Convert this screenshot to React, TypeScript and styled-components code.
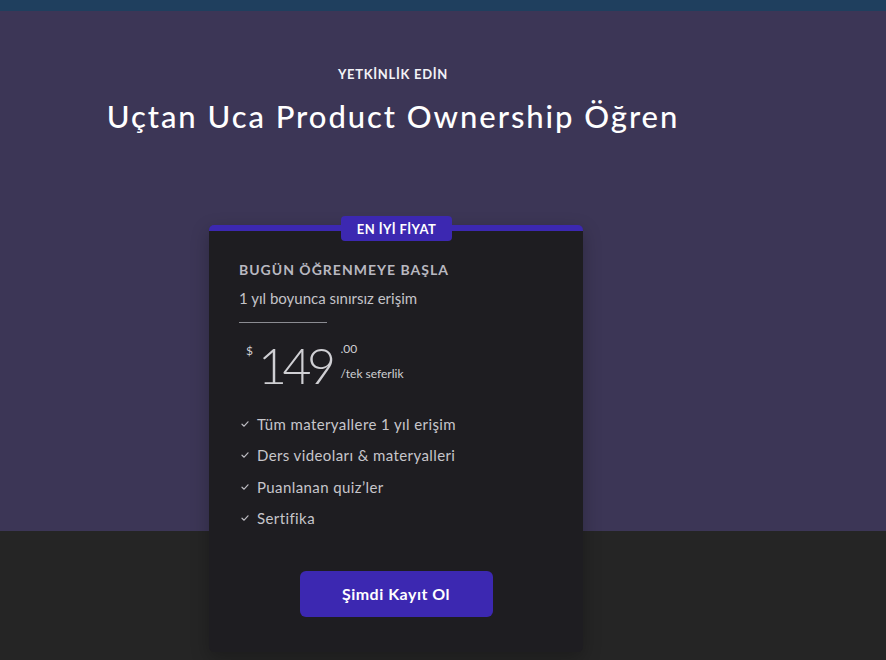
import React from "react";
import styled, { createGlobalStyle } from "styled-components";

const Global = createGlobalStyle`
  html, body { margin: 0; padding: 0; }
  body {
    width: 886px;
    height: 660px;
    overflow: hidden;
    font-family: "Lato", "Noto Sans", sans-serif;
    background: #252525;
  }
`;

const TopBar = styled.div`
  height: 11px;
  background: #1f3f5e;
`;

const Page = styled.div`
  background: linear-gradient(to bottom, #3c3656 0, #3c3656 520px, #252525 520px);
  height: 649px;
`;

const Container = styled.div`
  width: 786px;
  display: flex;
  flex-direction: column;
  align-items: center;
`;

const Eyebrow = styled.div`
  margin-top: 55px;
  font-size: 13px;
  font-weight: 700;
  letter-spacing: 0.7px;
  color: #f2f2f6;
  line-height: 16px;
`;

const Title = styled.h1`
  margin: 14px 0 0;
  font-size: 31px;
  font-weight: 500;
  color: #ffffff;
  line-height: 40px;
  letter-spacing: 1.95px;
`;

const Card = styled.div`
  position: relative;
  margin-top: 89px;
  margin-left: 6px;
  width: 374px;
  height: 427px;
  box-sizing: border-box;
  background: #1e1d21;
  border-top: 6px solid #3c28b1;
  border-radius: 5px;
  box-shadow: 0 6px 18px rgba(0, 0, 0, 0.25);
  padding: 30px 30px 0;
  display: flex;
  flex-direction: column;
`;

const Badge = styled.div`
  position: absolute;
  top: -15px;
  left: 132px;
  width: 111px;
  height: 25px;
  box-sizing: border-box;
  border-radius: 4px;
  background: #3c28b1;
  color: #ffffff;
  font-size: 13px;
  font-weight: 700;
  letter-spacing: 0.4px;
  display: flex;
  align-items: center;
  justify-content: center;
`;

const Kicker = styled.div`
  font-size: 14px;
  font-weight: 700;
  letter-spacing: 1px;
  color: #b9b8c0;
  line-height: 18px;
`;

const Sub = styled.div`
  margin-top: 10px;
  font-size: 15px;
  color: #c4c3c8;
  line-height: 18px;
`;

const Rule = styled.div`
  margin-top: 15px;
  width: 88px;
  height: 1px;
  background: #8b8c92;
`;

const PriceRow = styled.div`
  margin-top: 18px;
  display: flex;
  align-items: flex-start;
  color: #cfcfd3;
`;

const Currency = styled.span`
  font-size: 12px;
  line-height: 14px;
  margin: 3px 0 0 7px;
`;

const Amount = styled.span`
  font-size: 50px;
  font-weight: 300;
  line-height: 48px;
  margin-left: 5px;
  letter-spacing: -4.5px;
`;

const PriceMeta = styled.div`
  margin-left: 9px;
  display: flex;
  flex-direction: column;
  font-size: 12px;
  line-height: 13px;
`;

const Cents = styled.span`
  margin-top: 1px;
`;

const Per = styled.span`
  margin-top: 12px;
`;

const Features = styled.ul`
  list-style: none;
  margin: 26px 0 0;
  padding: 0;
  display: flex;
  flex-direction: column;
  gap: 13.3px;
`;

const Feature = styled.li`
  display: flex;
  align-items: center;
  gap: 8px;
  font-size: 15px;
  line-height: 18px;
  letter-spacing: 0.4px;
  color: #c7c6cb;
  padding-left: 2px;
`;

const Button = styled.button`
  margin: 44px auto 0;
  width: 193px;
  height: 46px;
  border: none;
  border-radius: 6px;
  background: #3c28b1;
  color: #ffffff;
  font-family: inherit;
  font-size: 16px;
  font-weight: 700;
  letter-spacing: 0.5px;
  cursor: pointer;
`;

const Check = () => (
  <svg width="8" height="8" viewBox="0 0 8 8" fill="none">
    <path d="M1 4.2 L3.1 6.2 L7 1.8" stroke="#bdbcc2" strokeWidth="1.2" strokeLinecap="round" strokeLinejoin="round" />
  </svg>
);

const features = [
  "Tüm materyallere 1 yıl erişim",
  "Ders videoları & materyalleri",
  "Puanlanan quiz’ler",
  "Sertifika",
];

export default function App() {
  return (
    <>
      <Global />
      <TopBar />
      <Page>
        <Container>
          <Eyebrow>YETKİNLİK EDİN</Eyebrow>
          <Title>Uçtan Uca Product Ownership Öğren</Title>
          <Card>
            <Badge>EN İYİ FİYAT</Badge>
            <Kicker>BUGÜN ÖĞRENMEYE BAŞLA</Kicker>
            <Sub>1 yıl boyunca sınırsız erişim</Sub>
            <Rule />
            <PriceRow>
              <Currency>$</Currency>
              <Amount>149</Amount>
              <PriceMeta>
                <Cents>.00</Cents>
                <Per>/tek seferlik</Per>
              </PriceMeta>
            </PriceRow>
            <Features>
              {features.map((f) => (
                <Feature key={f}>
                  <Check />
                  {f}
                </Feature>
              ))}
            </Features>
            <Button>Şimdi Kayıt Ol</Button>
          </Card>
        </Container>
      </Page>
    </>
  );
}
